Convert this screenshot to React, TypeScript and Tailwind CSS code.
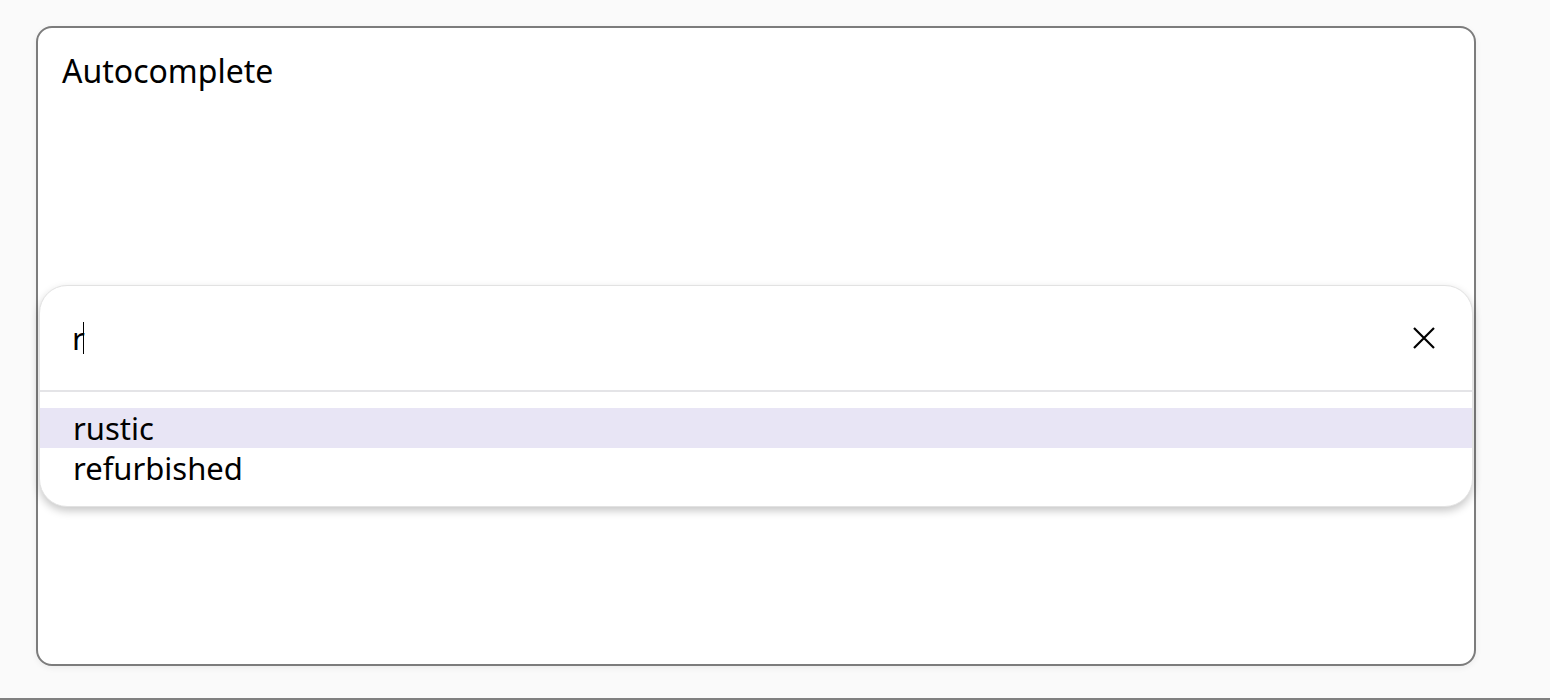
const options = ["rustic", "refurbished"];

function CloseIcon() {
  return (
    <svg width="22" height="22" viewBox="0 0 22 22" className="text-black">
      <path d="M1 1L21 21M21 1L1 21" stroke="currentColor" strokeWidth="2.2" />
    </svg>
  );
}

function Autocomplete() {
  return (
    <div className="mt-[192px] mx-px rounded-[28px] border border-[#e2e2e2] bg-white shadow-[0_4px_8px_rgba(0,0,0,0.22)] overflow-hidden">
      <div className="flex items-center h-[106px] pl-[32px] pr-[37px] border-b-2 border-[#e4e4e7]">
        <div className="flex-1 flex items-center text-[31px] text-black">
          <span>r</span>
          <span className="w-px h-[32px] bg-black -ml-[2px]" />
        </div>
        <CloseIcon />
      </div>
      <ul className="pt-4 pb-[18px]">
        {options.map((opt, i) => (
          <li
            key={opt}
            className={
              "h-10 leading-10 pl-[33px] text-[31px] text-black " +
              (i === 0 ? "bg-[#e8e5f5]" : "")
            }
          >
            {opt}
          </li>
        ))}
      </ul>
    </div>
  );
}

export default function App() {
  return (
    <div
      className="h-[700px] bg-[#fafafa] flex flex-col"
      style={{ fontFamily: '"Noto Sans", sans-serif' }}
    >
      <div className="flex-1 pt-[26px] pl-9">
        <div className="w-[1440px] h-[640px] rounded-2xl border-2 border-[#7c7c7c] bg-white shadow-[0_2px_6px_rgba(0,0,0,0.06)]">
          <div className="pt-[21px] pl-6 text-[32px] leading-[44px] text-black">
            Autocomplete
          </div>
          <Autocomplete />
        </div>
      </div>
      <div className="h-[2px] bg-[#808080]" />
    </div>
  );
}
